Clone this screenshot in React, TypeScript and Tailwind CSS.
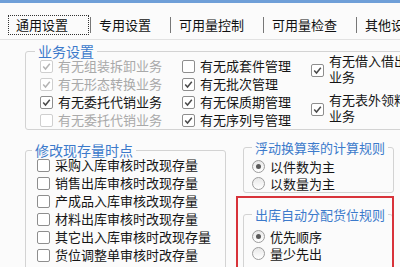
import React from "react";

const font = { fontFamily: '"Noto Sans CJK SC", "Noto Sans", sans-serif' };

type CheckProps = { checked?: boolean; disabled?: boolean };

const CheckBox: React.FC<CheckProps> = ({ checked, disabled }) => (
  <span
    className={`w-[13px] h-[13px] shrink-0 rounded-[2px] border bg-white flex items-center justify-center ${
      disabled ? "border-[#cfcfcf]" : "border-[#8e8e8e]"
    }`}
  >
    {checked && (
      <svg width="9" height="9" viewBox="0 0 9 9">
        <polyline
          points="1.2,4.6 3.5,7 7.8,1.8"
          fill="none"
          stroke={disabled ? "#b4b4b4" : "#4a4a4a"}
          strokeWidth="1.5"
        />
      </svg>
    )}
  </span>
);

const Radio: React.FC<{ selected?: boolean }> = ({ selected }) => (
  <span className="w-[13px] h-[13px] shrink-0 rounded-full border border-[#9c9c9c] bg-gradient-to-b from-[#e8e8e8] to-white flex items-center justify-center">
    {selected && <span className="w-[5px] h-[5px] rounded-full bg-[#5a5a5a]" />}
  </span>
);

const CheckRow: React.FC<{ label: string; checked?: boolean; disabled?: boolean }> = ({ label, checked, disabled }) => (
  <div className="flex items-center gap-[5px] h-[18px] whitespace-nowrap">
    <CheckBox checked={checked} disabled={disabled} />
    <span className={disabled ? "text-[#a9a9a9]" : "text-[#151515]"}>{label}</span>
  </div>
);

const RadioRow: React.FC<{ label: string; selected?: boolean }> = ({ label, selected }) => (
  <div className="flex items-center gap-[5px] h-[17px] whitespace-nowrap">
    <Radio selected={selected} />
    <span className="text-[#151515]">{label}</span>
  </div>
);

const tabs = ["通用设置", "专用设置", "可用量控制", "可用量检查", "其他设置"];

export default function App() {
  return (
    <div
      className="w-[400px] h-[267px] overflow-hidden bg-[#fbfbfb] text-[13px] leading-[18px]"
      style={font}
    >
      <div className="h-[3px] bg-[#6f9fd8]" />

      {/* tabs */}
      <div className="flex items-center h-[21px] mt-[11px] pl-[8px] whitespace-nowrap">
        {tabs.map((t, i) => (
          <React.Fragment key={t}>
            <span
              className={`h-[20px] flex items-center pl-[7px] ${
                i === 0 ? "pr-[20px] border border-dotted border-[#333]" : "pr-[18px]"
              } text-[#111]`}
            >
              {t}
            </span>
            <span className="w-px h-[16px] bg-[#777] mx-[1px] shrink-0" />
          </React.Fragment>
        ))}
      </div>
      <div className="h-px bg-[#e2e2e2] mt-[4px]" />

      {/* 业务设置 */}
      <fieldset className="ml-[25px] w-[420px] mt-[3px] border border-[#d3d3d3] rounded-[3px] p-0 h-[87px]">
        <legend className="ml-[9px] px-[3px] text-[14px] leading-[17px] text-[#3c7acb]">业务设置</legend>
        <div className="flex pl-[14px]">
          <div className="w-[142px] -mt-[3px]">
            <CheckRow label="有无组装拆卸业务" checked disabled />
            <CheckRow label="有无形态转换业务" checked disabled />
            <CheckRow label="有无委托代销业务" checked />
            <CheckRow label="有无委托代销业务" disabled />
          </div>
          <div className="w-[129px] -mt-[3px]">
            <CheckRow label="有无成套件管理" />
            <CheckRow label="有无批次管理" checked />
            <CheckRow label="有无保质期管理" checked />
            <CheckRow label="有无序列号管理" checked />
          </div>
          <div className="-mt-[7px] flex flex-col gap-[7px] leading-[16px]">
            <div className="flex items-center gap-[5px]">
              <span className="mt-[3px]">
                <CheckBox checked />
              </span>
              <span className="text-[#151515]">
                有无借入借出
                <br />
                业务
              </span>
            </div>
            <div className="flex items-center gap-[5px]">
              <span className="mt-[3px]">
                <CheckBox checked />
              </span>
              <span className="text-[#151515]">
                有无表外领料
                <br />
                业务
              </span>
            </div>
          </div>
        </div>
      </fieldset>

      <div className="flex mt-[12px]">
        {/* 修改现存量时点 */}
        <fieldset className="ml-[25px] w-[201px] h-[140px] border border-[#d3d3d3] rounded-[3px] p-0 overflow-hidden">
          <legend className="ml-[6px] px-[3px] text-[14px] leading-[17px] text-[#3c7acb]">修改现存量时点</legend>
          <div className="pl-[11px] -mt-[3px]">
            <CheckRow label="采购入库审核时改现存量" />
            <CheckRow label="销售出库审核时改现存量" />
            <CheckRow label="产成品入库审核改现存量" />
            <CheckRow label="材料出库审核时改现存量" />
            <CheckRow label="其它出入库审核时改现存量" />
            <CheckRow label="货位调整单审核时改存量" />
          </div>
        </fieldset>

        {/* right column */}
        <div className="ml-[17px] w-[151px] -mt-[3px]">
          <fieldset className="border border-[#d3d3d3] rounded-[3px] p-0 h-[54px]">
            <legend className="ml-[8px] px-[3px] leading-[17px] text-[#3c7acb] whitespace-nowrap">
              浮动换算率的计算规则
            </legend>
            <div className="pl-[8px] mt-[2px]">
              <RadioRow label="以件数为主" selected />
              <RadioRow label="以数量为主" />
            </div>
          </fieldset>

          <div className="relative mt-[13px]">
            <fieldset className="border border-[#d3d3d3] rounded-[3px] p-0 h-[80px] mr-[1px]">
              <legend className="ml-[8px] px-[3px] leading-[17px] text-[#3c7acb] whitespace-nowrap">
                出库自动分配货位规则
              </legend>
              <div className="pl-[8px] mt-[5px]">
                <RadioRow label="优先顺序" selected />
                <RadioRow label="量少先出" />
              </div>
            </fieldset>
            {/* annotation highlight */}
            <div className="absolute -left-[7px] -top-[10px] right-0 h-[90px] border-2 border-[#d8333a] pointer-events-none" />
          </div>
        </div>
      </div>
    </div>
  );
}
